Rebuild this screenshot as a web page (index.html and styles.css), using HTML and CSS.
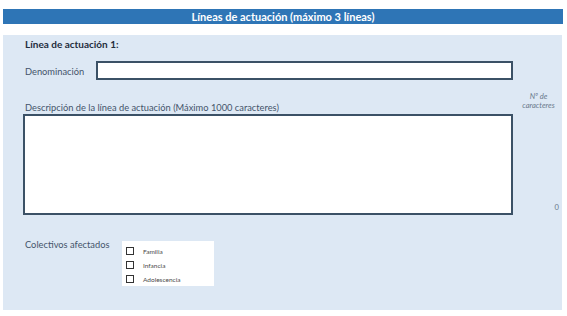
FILE: index.html
```html
<!DOCTYPE html>
<html lang="es">
<head>
    <meta charset="UTF-8">
    <meta name="viewport" content="width=device-width, initial-scale=1.0">
    <title>Líneas de actuación</title>
    <link rel="stylesheet" href="styles.css">
</head>
<body>

    <div class="page">
        <div class="title-bar">Líneas de actuación (máximo 3 líneas)</div>

        <div class="panel">
            <div class="heading">Línea de actuación 1:</div>

            <!-- Denominación -->
            <div class="field-row">
                <label for="denominacion">Denominación</label>
                <input type="text" id="denominacion" name="denominacion">
            </div>

            <!-- Descripción con contador de caracteres -->
            <div class="desc-row">
                <div class="desc-main">
                    <label for="descripcion">Descripción de la línea de actuación (Máximo 1000 caracteres)</label>
                    <textarea id="descripcion" name="descripcion"></textarea>
                </div>
                <div class="desc-side">
                    <div class="count-note">Nº de<br>caracteres</div>
                    <div class="count-value">0</div>
                </div>
            </div>

            <!-- Colectivos afectados -->
            <div class="groups-row">
                <div class="groups-label">Colectivos afectados</div>
                <div class="groups-box">
                    <label class="check"><input type="checkbox"><span>Familia</span></label>
                    <label class="check"><input type="checkbox"><span>Infancia</span></label>
                    <label class="check"><input type="checkbox"><span>Adolescencia</span></label>
                </div>
            </div>
        </div>
    </div>

</body>
</html>
```

FILE: styles.css
```css
body {
    margin: 0;
    background-color: white;
    font-family: Lato, "Open Sans", sans-serif;
}

.page {
    padding: 9px 4px 0 3px;
    width: 560px;
}

.title-bar {
    background-color: #2e75b6;
    color: white;
    font-weight: bold;
    font-size: 11px;
    height: 15px;
    line-height: 15px;
    text-align: center;
}

.panel {
    margin-top: 11px;
    background-color: #dde8f4;
    height: 272px;
    padding: 3px 0 0 20px;
    width: 539px;
}

.heading {
    font-weight: bold;
    font-size: 10px;
    line-height: 12px;
    color: #1f2d3d;
    margin-left: 2px;
}

label, .groups-label {
    color: #44546a;
    font-size: 9.3px;
}

/* Denominación */
.field-row {
    display: flex;
    margin-top: 11px;
}

.field-row label {
    width: 71px;
    margin-left: 2px;
    padding-top: 5px;
}

.field-row input {
    width: 413px;
    height: 15px;
    padding: 0;
    margin: 0;
    border: 2px solid #3b5166;
    background: white;
}

/* Descripción */
.desc-row {
    display: flex;
    margin-top: 11px;
}

.desc-main {
    width: 490px;
    padding-top: 11px;
    display: flex;
    flex-direction: column;
}

.desc-main label {
    margin-left: 2px;
    line-height: 12px;
}

.desc-main textarea {
    width: 486px;
    height: 97px;
    margin: 0;
    padding: 0;
    border: 2px solid #3b5166;
    resize: none;
    background: white;
}

.desc-side {
    width: 49px;
    display: flex;
    flex-direction: column;
    justify-content: space-between;
}

.count-note {
    font-style: italic;
    font-size: 7.6px;
    line-height: 9px;
    color: #6a7a8c;
    text-align: center;
    padding: 1px 0 0 2px;
}

.count-value {
    font-size: 7.6px;
    color: #6a7a8c;
    text-align: right;
    padding-right: 3px;
    margin-bottom: 3px;
}

/* Colectivos afectados */
.groups-row {
    display: flex;
    margin-top: 24px;
}

.groups-label {
    width: 97px;
    margin-left: 2px;
    line-height: 12px;
}

.groups-box {
    background: white;
    width: 92px;
    height: 45px;
    margin-top: 2px;
    padding-top: 3px;
    box-sizing: border-box;
    display: flex;
    flex-direction: column;
}

.check {
    display: flex;
    align-items: center;
    height: 14.5px;
    padding-left: 4px;
    color: #4a4a4a;
    font-size: 6.5px;
    font-weight: normal;
}

.check input {
    appearance: none;
    width: 8px;
    height: 8px;
    margin: 0 9px 0 0;
    border: 1px solid #333;
    background: white;
}
```
